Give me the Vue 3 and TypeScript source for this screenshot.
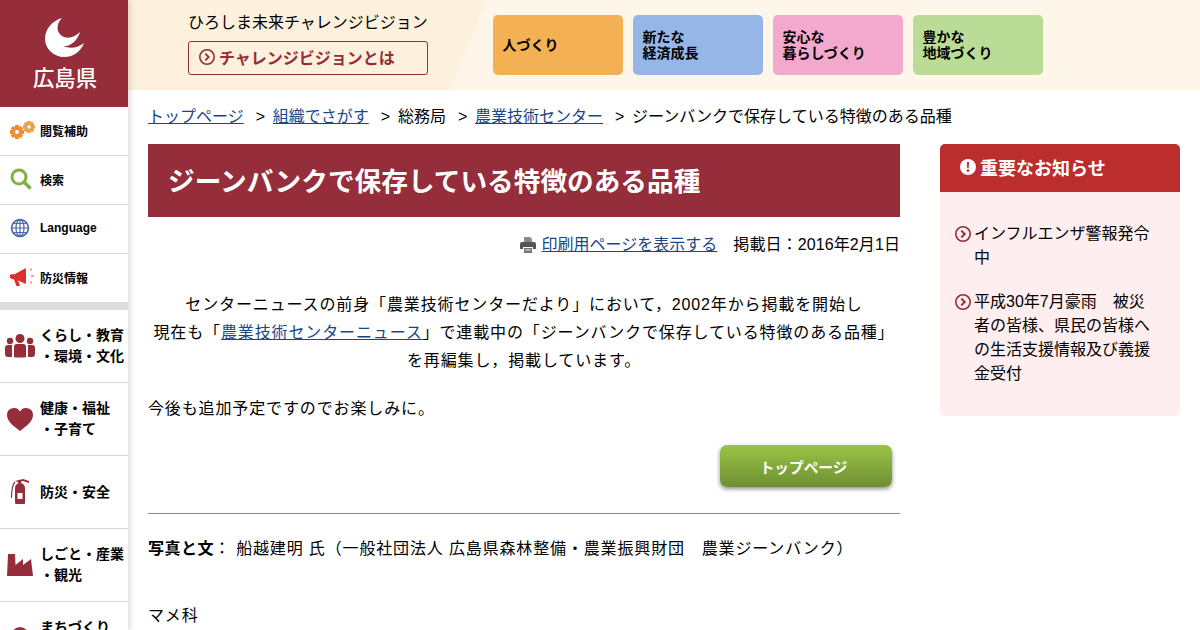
<template>
  <div class="page">
    <aside class="side">
      <div class="logo">
        <svg width="44" height="44" viewBox="0 0 44 44">
          <path d="M19 2C9 5 2 13 2 23C2 33 11 41 21 41C31 41 38 35 41 27C35 32 27 33 20 30C26 31 34 26 37 16C31 22 24 23 19 20C13 16 13 8 19 2Z" fill="#fff" />
        </svg>
        <div class="logo-name">広島県</div>
      </div>
      <a v-for="t in tools" :key="t.label" class="tool">
        <span class="tool-icon" v-html="t.icon"></span>
        <span>{{ t.label }}</span>
      </a>
      <div class="side-band"></div>
      <a v-for="c in cats" :key="c.lines[0]" class="cat">
        <span class="cat-icon" v-html="c.icon"></span>
        <span class="cat-label">
          <span v-for="l in c.lines" :key="l" class="cat-line">{{ l }}</span>
        </span>
      </a>
    </aside>

    <div class="right">
      <header class="top">
        <div class="vision">
          <div class="vision-title">ひろしま未来チャレンジビジョン</div>
          <a class="vision-btn">
            <svg width="16" height="16" viewBox="0 0 16 16" class="ring">
              <circle cx="8" cy="8" r="7.2" fill="none" stroke="#952d3b" stroke-width="1.6" />
              <path d="M6.3 4.600 9.700 8l-3.400 3.400" fill="none" stroke="#952d3b" stroke-width="1.800" />
            </svg>
            チャレンジビジョンとは
          </a>
        </div>
        <nav class="tiles">
          <a v-for="tile in tiles" :key="tile.text" class="tile" :style="{ background: tile.color }">{{ tile.text }}</a>
        </nav>
      </header>

      <div class="body">
        <main class="main">
          <div class="crumbs">
            <a class="link">トップページ</a><span class="sep">&gt;</span>
            <a class="link">組織でさがす</a><span class="sep">&gt;</span>
            <span>総務局</span><span class="sep">&gt;</span>
            <a class="link">農業技術センター</a><span class="sep">&gt;</span>
            <span>ジーンバンクで保存している特徴のある品種</span>
          </div>
          <h1 class="title">ジーンバンクで保存している特徴のある品種</h1>
          <div class="meta">
            <svg width="16" height="17" viewBox="0 0 16 17" class="printer">
              <path d="M4 1h6l2 2v3H4z" fill="#8a8a8a" />
              <path d="M2 6h12a2 2 0 0 1 2 2v5h-3v-2H3v2H0V8a2 2 0 0 1 2-2z" fill="#555" />
              <path d="M4 12h8v5H4z" fill="#777" />
              <path d="M5.500 14h5" stroke="#fff" stroke-width="0.800" />
            </svg>
            <a class="link">印刷用ページを表示する</a>
            <span class="date">掲載日：2016年2月1日</span>
          </div>
          <div class="lead">
            <p>センターニュースの前身「農業技術センターだより」において，2002年から掲載を開始し</p>
            <p>現在も「<a class="link">農業技術センターニュース</a>」で連載中の「ジーンバンクで保存している特徴のある品種」</p>
            <p>を再編集し，掲載しています。</p>
          </div>
          <p class="plain">今後も追加予定ですのでお楽しみに。</p>
          <div class="btn-row">
            <a class="top-btn">トップページ</a>
          </div>
          <hr class="rule" />
          <p class="credit"><b>写真と文</b>： 船越建明 氏（一般社団法人 広島県森林整備・農業振興財団　農業ジーンバンク）</p>
          <p class="bean">マメ科</p>
        </main>

        <section class="notice">
          <h2 class="notice-head">
            <svg width="16" height="16" viewBox="0 0 16 16">
              <circle cx="8" cy="8" r="8" fill="#fff" />
              <path d="M6.900 3h2.200l-.4 6.200H7.300z" fill="#bc2d2d" />
              <circle cx="8" cy="11.600" r="1.300" fill="#bc2d2d" />
            </svg>
            重要なお知らせ
          </h2>
          <ul class="notice-list">
            <li v-for="n in notices" :key="n">
              <svg width="16" height="16" viewBox="0 0 16 16" class="ring">
                <circle cx="8" cy="8" r="7.200" fill="none" stroke="#952d3b" stroke-width="1.600" />
                <path d="M6.300 4.600 9.700 8l-3.400 3.400" fill="none" stroke="#952d3b" stroke-width="2" />
              </svg>
              <span>{{ n }}</span>
            </li>
          </ul>
        </section>
      </div>
    </div>
  </div>
</template>

<script setup lang="ts">
interface Tile {
  text: string;
  color: string;
}

const gear = (x: number, y: number, r: number, color: string) => {
  const teeth = [0, 45, 90, 135]
    .map(a => `<rect x="${x - r * 0.28}" y="${y - r}" width="${r * 0.56}" height="${r * 2}" fill="${color}" transform="rotate(${a} ${x} ${y})"/>`)
    .join('');
  return `<g>${teeth}<circle cx="${x}" cy="${y}" r="${r * 0.72}" fill="${color}"/><circle cx="${x}" cy="${y}" r="${r * 0.28}" fill="#fff"/></g>`;
};

const tools = [
  {
    label: '閲覧補助',
    icon: `<svg width="26" height="20" viewBox="0 0 26 20">${gear(7, 12, 7, '#e98f37')}${gear(19, 7, 6, '#eaa04c')}</svg>`,
  },
  {
    label: '検索',
    icon: '<svg width="22" height="22" viewBox="0 0 22 22"><circle cx="9" cy="9" r="7" fill="none" stroke="#7eb344" stroke-width="3"/><path d="M14 14l5.500 5.500" stroke="#7eb344" stroke-width="3.600" stroke-linecap="round"/></svg>',
  },
  {
    label: 'Language',
    icon: '<svg width="20" height="20" viewBox="0 0 20 20" fill="none" stroke="#4a67ab" stroke-width="1.200"><circle cx="10" cy="10" r="8.400" stroke-width="1.600"/><ellipse cx="10" cy="10" rx="4" ry="8.400"/><path d="M10 1.600v16.800M1.600 10h16.800M3 5.500h14M3 14.500h14"/></svg>',
  },
  {
    label: '防災情報',
    icon: '<svg width="26" height="20" viewBox="0 0 26 20"><path d="M0 8l2-1 2 .5L16 1v16L8 13.500 10 19H6.500L4 12.500 2 12l-2-1z" fill="#e0302d"/><path d="M20 3l2-1M21 9h3M20 15l2 1" stroke="#e88" stroke-width="1.400"/></svg>',
  },
];

const cats = [
  {
    icon: '<svg width="30" height="24" viewBox="0 0 30 24" fill="#952d3b"><circle cx="15" cy="4.500" r="4.500"/><circle cx="5" cy="7" r="3.200"/><circle cx="25" cy="7" r="3.200"/><path d="M9 13a3 3 0 0 1 3-3h6a3 3 0 0 1 3 3v9a1.500 1.500 0 0 1-1.500 1.500h-9A1.500 1.500 0 0 1 9 22z"/><path d="M0 14a3 3 0 0 1 3-3h4v12H3a3 3 0 0 1-3-3zM30 14a3 3 0 0 0-3-3h-4v12h4a3 3 0 0 0 3-3z"/></svg>',
    lines: ['くらし・教育', '・環境・文化'],
  },
  {
    icon: '<svg width="26" height="23" viewBox="0 0 26 23" fill="#952d3b"><path d="M13 23C8 19 0 14 0 7a7 7 0 0 1 13-3.500A7 7 0 0 1 26 7c0 7-8 12-13 16z"/></svg>',
    lines: ['健康・福祉', '・子育て'],
  },
  {
    icon: '<svg width="20" height="26" viewBox="0 0 20 26" fill="#952d3b"><path d="M5 9a5 5 0 0 1 10 0v15a1 1 0 0 1-1 1H6a1 1 0 0 1-1-1z"/><rect x="7.500" y="14" width="5" height="6" fill="#fff"/><path d="M5 2L13 0l6 2v2l-6-2-2 .5V4H8V3z"/><path d="M5 3C2 6 1.500 12 1.500 19" fill="none" stroke="#952d3b" stroke-width="1.200"/></svg>',
    lines: ['防災・安全'],
  },
  {
    icon: '<svg width="26" height="23" viewBox="0 0 26 23" fill="#952d3b"><path d="M1 0H8L8.500 11 16 5V11L24 5 26 22H0Z"/></svg>',
    lines: ['しごと・産業', '・観光'],
  },
  {
    icon: '<svg width="26" height="23" viewBox="0 0 26 23" fill="#952d3b"><circle cx="13" cy="9" r="9"/><path d="M5 13h16l-8 10z"/></svg>',
    lines: ['まちづくり', '・土木'],
  },
];

const tiles: Tile[] = [
  { text: '人づくり', color: '#f3b154' },
  { text: '新たな\n経済成長', color: '#96b6e7' },
  { text: '安心な\n暮らしづくり', color: '#f2a9cd' },
  { text: '豊かな\n地域づくり', color: '#bbdc97' },
];

const notices = ['インフルエンザ警報発令中', '平成30年7月豪雨　被災者の皆様、県民の皆様への生活支援情報及び義援金受付'];
</script>

<style scoped>
.page {
  display: flex;
  height: 630px;
  overflow: hidden;
  font-family: "Liberation Sans", "Noto Sans CJK JP", sans-serif;
  color: #000;
  font-size: 16px;
}

.side {
  width: 128px;
  flex-shrink: 0;
  height: 630px;
  overflow: hidden;
  background: #fff;
  box-shadow: 2px 0 6px rgba(0, 0, 0, 0.15);
  position: relative;
  z-index: 1;
}

.logo {
  height: 107px;
  background: #952d3b;
  display: flex;
  flex-direction: column;
  align-items: center;
  padding: 16px 0 0 2px;
  box-sizing: border-box;
}

.logo-name {
  color: #fff;
  font-size: 21.33px;
  line-height: 26px;
  margin-top: 6px;
  font-weight: 500;
}

.tool {
  display: flex;
  align-items: center;
  height: 49px;
  box-sizing: border-box;
  padding-bottom: 2px;
  border-bottom: 1px solid #d8d8d8;
  font-size: 12px;
  font-weight: 700;
}

.tool:nth-of-type(4) {
  height: 48px;
  border-bottom: none;
}

.tool-icon {
  width: 40px;
  display: flex;
  padding-left: 10px;
  box-sizing: border-box;
}

.side-band {
  height: 8px;
  background: #dcdcdc;
}

.cat {
  display: flex;
  align-items: center;
  height: 72px;
  border-bottom: 1px solid #d8d8d8;
  font-size: 14px;
  font-weight: 700;
}

.cat-icon {
  width: 40px;
  display: flex;
  justify-content: center;
  flex-shrink: 0;
}

.cat-line {
  display: block;
  line-height: 21px;
  white-space: nowrap;
}

.right {
  flex: 1;
  min-width: 0;
}

.top {
  height: 90px;
  display: flex;
  background: #fff6ea;
}

.vision {
  width: 359px;
  flex-shrink: 0;
  padding: 12px 0 0 60px;
  box-sizing: border-box;
  background: #fdf1dd;
  clip-path: polygon(0 0, 100% 0, 322px 100%, 0 100%);
}

.vision-title {
  font-size: 16px;
  line-height: 22px;
}

.vision-btn {
  width: 240px;
  height: 34px;
  margin-top: 7px;
  box-sizing: border-box;
  border: 1px solid #952d3b;
  border-radius: 3px;
  display: flex;
  align-items: center;
  gap: 4px;
  padding: 0 0 2px 10px;
  color: #952d3b;
  font-weight: 700;
}

.tiles {
  display: flex;
  gap: 10px;
  margin: 15px 0 0 6px;
}

.tile {
  width: 130px;
  height: 60px;
  border-radius: 5px;
  display: flex;
  align-items: center;
  padding-left: 9.5px;
  box-sizing: border-box;
  font-size: 14px;
  font-weight: 700;
  line-height: 16px;
  white-space: pre-line;
}

.body {
  display: flex;
  gap: 40px;
  padding-left: 20px;
}

.main {
  width: 752px;
  flex-shrink: 0;
}

.link {
  color: #1a4587;
  text-decoration: underline;
}

.crumbs {
  height: 54px;
  padding-top: 16px;
  box-sizing: border-box;
  line-height: 22px;
  white-space: nowrap;
}

.sep {
  margin: 0 7.75px 0 12px;
}

.title {
  margin: 0;
  height: 73px;
  background: #952d3b;
  color: #fff;
  font-size: 26.67px;
  line-height: 76px;
  font-weight: 700;
  padding-left: 20px;
}

.meta {
  display: flex;
  justify-content: flex-end;
  align-items: center;
  height: 22px;
  margin-top: 15px;
}

.printer {
  margin: 3px 6px 0 0;
}

.date {
  margin-left: 16px;
  letter-spacing: 0.1px;
}

.lead {
  margin-top: 37px;
  text-align: center;
  letter-spacing: 0.87px;
  line-height: 28px;
}

.lead p {
  margin: 0;
}

.plain {
  margin: 20px 0 0;
  line-height: 28px;
  letter-spacing: 0.87px;
}

.btn-row {
  display: flex;
  justify-content: flex-end;
  padding-right: 8px;
  margin-top: 22px;
}

.top-btn {
  width: 172px;
  height: 42px;
  padding-right: 5px;
  box-sizing: border-box;
  border-radius: 7px;
  background: linear-gradient(#9ac445, #6f8f34);
  box-shadow: 0 2px 4px rgba(0, 0, 0, 0.45);
  color: #fff;
  font-size: 14.67px;
  font-weight: 700;
  display: flex;
  align-items: center;
  justify-content: center;
}

.rule {
  margin: 26px 0 0;
  border: none;
  border-top: 1px solid #888;
}

.credit {
  margin: 21px 0 0;
  line-height: 28px;
  letter-spacing: 0.85px;
  white-space: nowrap;
}

.credit b {
  letter-spacing: 0.5px;
}

.bean {
  margin: 39px 0 0;
  line-height: 28px;
  letter-spacing: 0.87px;
}

.notice {
  width: 240px;
  height: 272px;
  margin-top: 54px;
  background: #feeef0;
  border-radius: 5px;
  overflow: hidden;
}

.notice-head {
  margin: 0;
  height: 48px;
  padding-bottom: 2px;
  box-sizing: border-box;
  background: #bc2d2d;
  color: #fff;
  font-size: 18px;
  font-weight: 700;
  display: flex;
  align-items: center;
  gap: 4px;
  padding-left: 20px;
}

.notice-list {
  list-style: none;
  margin: 0;
  padding: 30px 24px 0 15px;
}

.notice-list li {
  display: flex;
  gap: 3px;
  line-height: 24px;
  margin-bottom: 20px;
}

.notice-list .ring {
  margin-top: 4px;
}

.ring {
  flex-shrink: 0;
}
</style>
